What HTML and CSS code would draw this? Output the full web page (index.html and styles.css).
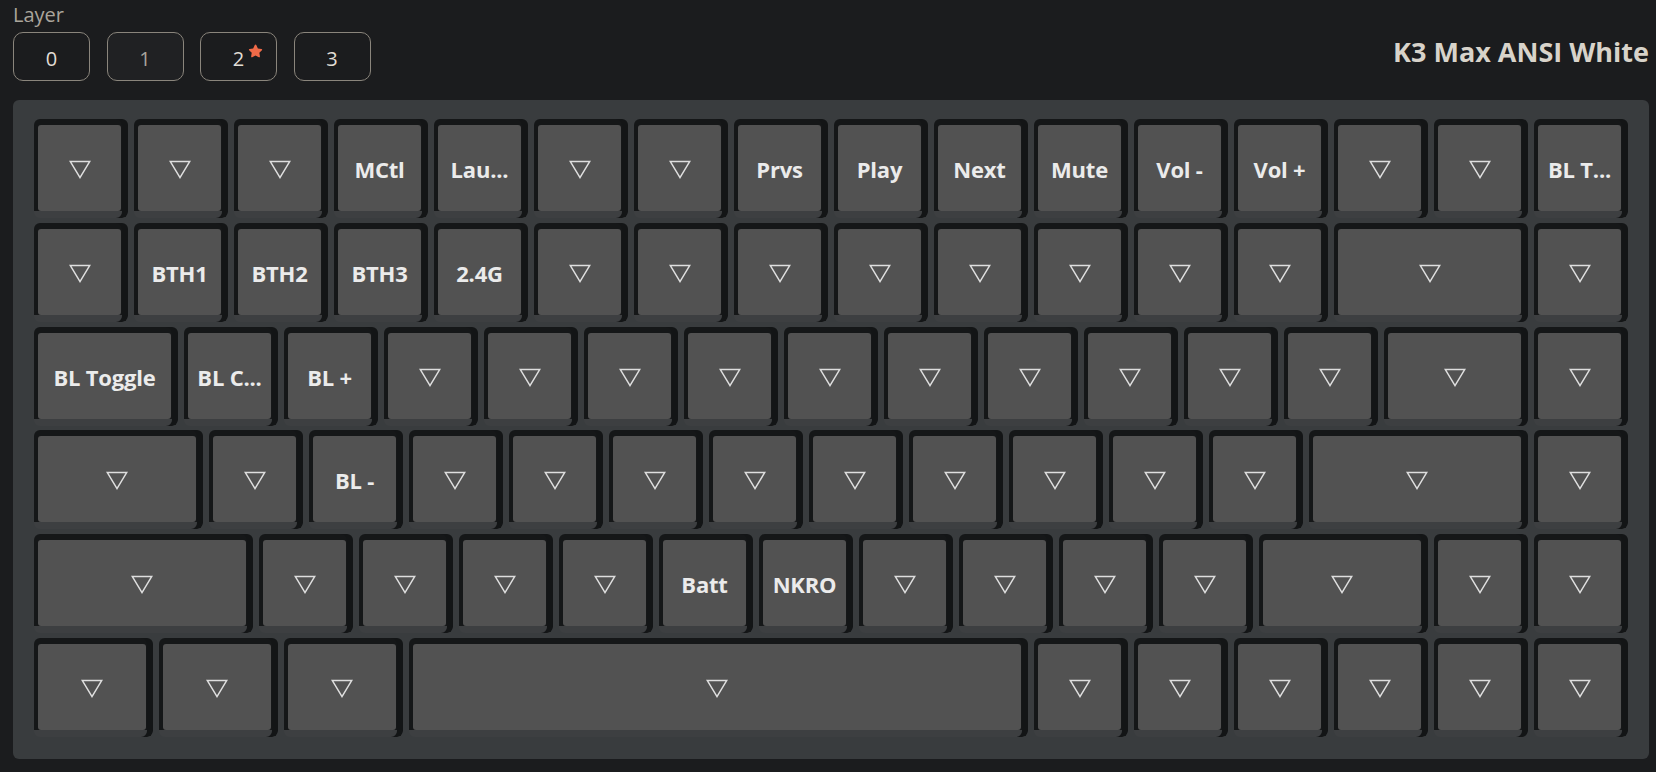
FILE: index.html
```html
<!DOCTYPE html>
<html lang="en">
<head>
<meta charset="utf-8">
<title>K3 Max ANSI White</title>
<link rel="stylesheet" href="styles.css">
</head>
<body>
<svg class="defs" width="0" height="0" aria-hidden="true">
  <symbol id="tri" viewBox="0 0 22 19">
    <path d="M1.2 1.4 H20.8 L11 17.6 Z" fill="none" stroke="#dedede" stroke-width="1.5" stroke-linejoin="miter"/>
  </symbol>
</svg>
<div class="app">
  <header class="topbar">
    <div class="layers">
      <div class="layer-label">Layer</div>
      <div class="layer-buttons">
        <button class="layer-btn">0</button>
        <button class="layer-btn layer-btn--muted">1</button>
        <button class="layer-btn"><span class="layer-num">2<svg class="star" viewBox="0 0 24 24"><path d="M12 2.2c.5 0 .9.3 1.1.7l2.3 4.7 5.1.8c.9.1 1.3 1.2.6 1.9l-3.7 3.6.9 5.1c.2.9-.8 1.6-1.6 1.2L12 17.8l-4.6 2.4c-.8.4-1.8-.3-1.6-1.2l.9-5.1-3.7-3.600c-.7-.7-.3-1.8.6-1.9l5.1-.8 2.3-4.7c.2-.4.6-.7 1-.7z" fill="#f06a48"/></svg></span></button>
        <button class="layer-btn">3</button>
      </div>
    </div>
    <h1 class="title">K3 Max ANSI White</h1>
  </header>

  <main class="board">
    <div class="row">
      <div class="key u1"><div class="cap"><svg class="tri"><use href="#tri"/></svg></div></div>
      <div class="key u1"><div class="cap"><svg class="tri"><use href="#tri"/></svg></div></div>
      <div class="key u1"><div class="cap"><svg class="tri"><use href="#tri"/></svg></div></div>
      <div class="key u1"><div class="cap">MCtl</div></div>
      <div class="key u1"><div class="cap">Lau...</div></div>
      <div class="key u1"><div class="cap"><svg class="tri"><use href="#tri"/></svg></div></div>
      <div class="key u1"><div class="cap"><svg class="tri"><use href="#tri"/></svg></div></div>
      <div class="key u1"><div class="cap">Prvs</div></div>
      <div class="key u1"><div class="cap">Play</div></div>
      <div class="key u1"><div class="cap">Next</div></div>
      <div class="key u1"><div class="cap">Mute</div></div>
      <div class="key u1"><div class="cap">Vol -</div></div>
      <div class="key u1"><div class="cap">Vol +</div></div>
      <div class="key u1"><div class="cap"><svg class="tri"><use href="#tri"/></svg></div></div>
      <div class="key u1"><div class="cap"><svg class="tri"><use href="#tri"/></svg></div></div>
      <div class="key u1"><div class="cap">BL T...</div></div>
    </div>

    <div class="row">
      <div class="key u1"><div class="cap"><svg class="tri"><use href="#tri"/></svg></div></div>
      <div class="key u1"><div class="cap">BTH1</div></div>
      <div class="key u1"><div class="cap">BTH2</div></div>
      <div class="key u1"><div class="cap">BTH3</div></div>
      <div class="key u1"><div class="cap">2.4G</div></div>
      <div class="key u1"><div class="cap"><svg class="tri"><use href="#tri"/></svg></div></div>
      <div class="key u1"><div class="cap"><svg class="tri"><use href="#tri"/></svg></div></div>
      <div class="key u1"><div class="cap"><svg class="tri"><use href="#tri"/></svg></div></div>
      <div class="key u1"><div class="cap"><svg class="tri"><use href="#tri"/></svg></div></div>
      <div class="key u1"><div class="cap"><svg class="tri"><use href="#tri"/></svg></div></div>
      <div class="key u1"><div class="cap"><svg class="tri"><use href="#tri"/></svg></div></div>
      <div class="key u1"><div class="cap"><svg class="tri"><use href="#tri"/></svg></div></div>
      <div class="key u1"><div class="cap"><svg class="tri"><use href="#tri"/></svg></div></div>
      <div class="key u2"><div class="cap"><svg class="tri"><use href="#tri"/></svg></div></div>
      <div class="key u1"><div class="cap"><svg class="tri"><use href="#tri"/></svg></div></div>
    </div>

    <div class="row">
      <div class="key u15"><div class="cap">BL Toggle</div></div>
      <div class="key u1"><div class="cap">BL C...</div></div>
      <div class="key u1"><div class="cap">BL +</div></div>
      <div class="key u1"><div class="cap"><svg class="tri"><use href="#tri"/></svg></div></div>
      <div class="key u1"><div class="cap"><svg class="tri"><use href="#tri"/></svg></div></div>
      <div class="key u1"><div class="cap"><svg class="tri"><use href="#tri"/></svg></div></div>
      <div class="key u1"><div class="cap"><svg class="tri"><use href="#tri"/></svg></div></div>
      <div class="key u1"><div class="cap"><svg class="tri"><use href="#tri"/></svg></div></div>
      <div class="key u1"><div class="cap"><svg class="tri"><use href="#tri"/></svg></div></div>
      <div class="key u1"><div class="cap"><svg class="tri"><use href="#tri"/></svg></div></div>
      <div class="key u1"><div class="cap"><svg class="tri"><use href="#tri"/></svg></div></div>
      <div class="key u1"><div class="cap"><svg class="tri"><use href="#tri"/></svg></div></div>
      <div class="key u1"><div class="cap"><svg class="tri"><use href="#tri"/></svg></div></div>
      <div class="key u15"><div class="cap"><svg class="tri"><use href="#tri"/></svg></div></div>
      <div class="key u1"><div class="cap"><svg class="tri"><use href="#tri"/></svg></div></div>
    </div>

    <div class="row">
      <div class="key u175"><div class="cap"><svg class="tri"><use href="#tri"/></svg></div></div>
      <div class="key u1"><div class="cap"><svg class="tri"><use href="#tri"/></svg></div></div>
      <div class="key u1"><div class="cap">BL -</div></div>
      <div class="key u1"><div class="cap"><svg class="tri"><use href="#tri"/></svg></div></div>
      <div class="key u1"><div class="cap"><svg class="tri"><use href="#tri"/></svg></div></div>
      <div class="key u1"><div class="cap"><svg class="tri"><use href="#tri"/></svg></div></div>
      <div class="key u1"><div class="cap"><svg class="tri"><use href="#tri"/></svg></div></div>
      <div class="key u1"><div class="cap"><svg class="tri"><use href="#tri"/></svg></div></div>
      <div class="key u1"><div class="cap"><svg class="tri"><use href="#tri"/></svg></div></div>
      <div class="key u1"><div class="cap"><svg class="tri"><use href="#tri"/></svg></div></div>
      <div class="key u1"><div class="cap"><svg class="tri"><use href="#tri"/></svg></div></div>
      <div class="key u1"><div class="cap"><svg class="tri"><use href="#tri"/></svg></div></div>
      <div class="key u225"><div class="cap"><svg class="tri"><use href="#tri"/></svg></div></div>
      <div class="key u1"><div class="cap"><svg class="tri"><use href="#tri"/></svg></div></div>
    </div>

    <div class="row">
      <div class="key u225"><div class="cap"><svg class="tri"><use href="#tri"/></svg></div></div>
      <div class="key u1"><div class="cap"><svg class="tri"><use href="#tri"/></svg></div></div>
      <div class="key u1"><div class="cap"><svg class="tri"><use href="#tri"/></svg></div></div>
      <div class="key u1"><div class="cap"><svg class="tri"><use href="#tri"/></svg></div></div>
      <div class="key u1"><div class="cap"><svg class="tri"><use href="#tri"/></svg></div></div>
      <div class="key u1"><div class="cap">Batt</div></div>
      <div class="key u1"><div class="cap">NKRO</div></div>
      <div class="key u1"><div class="cap"><svg class="tri"><use href="#tri"/></svg></div></div>
      <div class="key u1"><div class="cap"><svg class="tri"><use href="#tri"/></svg></div></div>
      <div class="key u1"><div class="cap"><svg class="tri"><use href="#tri"/></svg></div></div>
      <div class="key u1"><div class="cap"><svg class="tri"><use href="#tri"/></svg></div></div>
      <div class="key u175"><div class="cap"><svg class="tri"><use href="#tri"/></svg></div></div>
      <div class="key u1"><div class="cap"><svg class="tri"><use href="#tri"/></svg></div></div>
      <div class="key u1"><div class="cap"><svg class="tri"><use href="#tri"/></svg></div></div>
    </div>

    <div class="row">
      <div class="key u125"><div class="cap"><svg class="tri"><use href="#tri"/></svg></div></div>
      <div class="key u125"><div class="cap"><svg class="tri"><use href="#tri"/></svg></div></div>
      <div class="key u125"><div class="cap"><svg class="tri"><use href="#tri"/></svg></div></div>
      <div class="key u625"><div class="cap"><svg class="tri"><use href="#tri"/></svg></div></div>
      <div class="key u1"><div class="cap"><svg class="tri"><use href="#tri"/></svg></div></div>
      <div class="key u1"><div class="cap"><svg class="tri"><use href="#tri"/></svg></div></div>
      <div class="key u1"><div class="cap"><svg class="tri"><use href="#tri"/></svg></div></div>
      <div class="key u1"><div class="cap"><svg class="tri"><use href="#tri"/></svg></div></div>
      <div class="key u1"><div class="cap"><svg class="tri"><use href="#tri"/></svg></div></div>
      <div class="key u1"><div class="cap"><svg class="tri"><use href="#tri"/></svg></div></div>
    </div>
  </main>
</div>
</body>
</html>
```

FILE: styles.css
```css
html, body {
  margin: 0;
  padding: 0;
  background: #1b1c1e;
  height: 100%;
}

body {
  font-family: "Open Sans", "Noto Sans", "Liberation Sans", sans-serif;
  overflow: hidden;
}

.defs {
  position: absolute;
  width: 0;
  height: 0;
}

.app {
  display: flex;
  flex-direction: column;
  padding: 0 7px 0 13px;
}

.topbar {
  display: flex;
  justify-content: space-between;
  align-items: flex-start;
  padding-top: 2px;
  padding-bottom: 19px;
}

.layers {
  display: flex;
  flex-direction: column;
}

.layer-label {
  font-size: 20px;
  line-height: 26px;
  color: #aaa59c;
}

.layer-buttons {
  display: flex;
  gap: 16.5px;
  margin-top: 4px;
}

.layer-btn {
  width: 77px;
  height: 49px;
  box-sizing: border-box;
  border: 1.5px solid #8a857c;
  border-radius: 10px;
  background: #1b1c1e;
  color: #e2ded6;
  font-family: "Open Sans", "Noto Sans", sans-serif;
  font-size: 20px;
  padding: 4px 0 0 0;
  display: flex;
  align-items: center;
  justify-content: center;
}

.layer-btn--muted {
  background: #202123;
  color: #a9a49b;
}

.layer-num {
  position: relative;
}

.star {
  position: absolute;
  width: 17px;
  height: 17px;
  left: 14px;
  top: -2px;
}

.title {
  margin: 32px 0 0 0;
  font-size: 27px;
  font-weight: 700;
  color: #d8d3ca;
  line-height: 36px;
}

.board {
  background: #393c3e;
  border-radius: 6px;
  padding: 19px 21px 22px 21px;
  display: flex;
  flex-direction: column;
  gap: 4.75px;
}

.row {
  display: flex;
  gap: 6px;
}

.key {
  height: 99px;
  box-sizing: border-box;
  flex: none;
  display: flex;
  padding: 6px 7px 7px 4px;
  border-radius: 6px;
  background:
    linear-gradient(#151718, #151718) left top / 100% calc(100% - 7px) no-repeat,
    #3d3f41;
  box-shadow: inset -6px 0 0 #131516;
}

.u1 { width: 94px; }
.u125 { width: 119px; }
.u15 { width: 144px; }
.u175 { width: 169px; }
.u2 { width: 194px; }
.u225 { width: 219px; }
.u625 { width: 619px; }

.cap {
  flex: 1;
  background: #525252;
  border-radius: 3px;
  display: flex;
  align-items: center;
  justify-content: center;
  color: #ebebeb;
  font-size: 22px;
  font-weight: 700;
  white-space: nowrap;
  overflow: hidden;
  letter-spacing: -0.2px;
  padding-top: 2px;
}

.tri {
  width: 22px;
  height: 19px;
  margin-top: 1px;
}
```
